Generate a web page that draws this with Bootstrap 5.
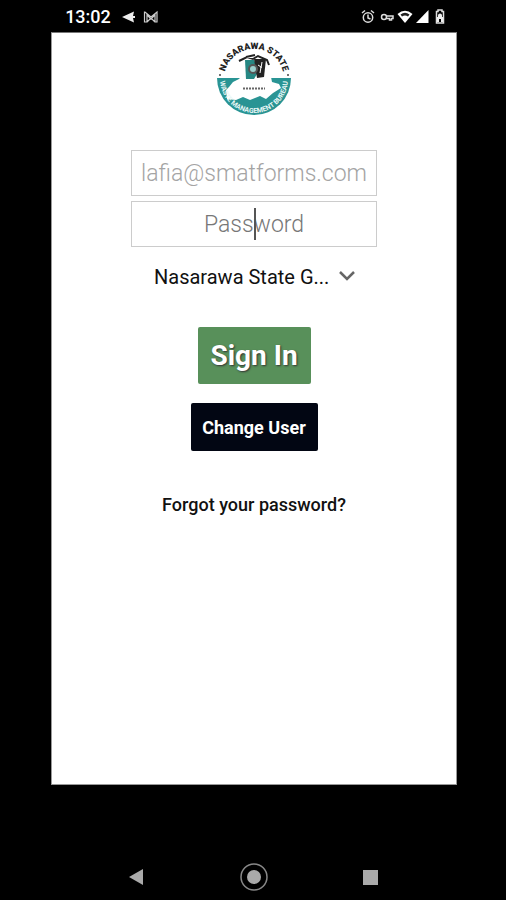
<!DOCTYPE html>
<html lang="en">
<head>
<meta charset="utf-8">
<meta name="viewport" content="width=device-width, initial-scale=1">
<title>Sign in</title>
<link href="https://cdn.jsdelivr.net/npm/bootstrap@5.3.0/dist/css/bootstrap.min.css" rel="stylesheet">
<style>
body { font-family: Roboto, "Liberation Sans", sans-serif; background: #000; color: #111; padding-left: 2px; }
.phone { width: 80.5%; }
.status-bar { height: 32px; padding: 2px 12px 0 14px; font-size: 18px; line-height: 30px; }
.screen { border: 1px solid #999; border-top-color: #777; padding-top: 8px; }
.form-column { width: 246px; padding-top: 7px; }
.text-field { height: 46px; padding: 0 4px; border: 1px solid #ccc; border-radius: 0; font-size: 23px; line-height: 32px; font-weight: 300; text-align: center; }
.text-field::placeholder { color: #777; opacity: 1; }
.text-field.email::placeholder { color: #a4a4a4; }
.password-row { margin-top: 5px; }
.caret-line { left: 50%; top: 7px; width: 2px; height: 32px; background: #555; }
.org-row { margin-top: 12px; }
.org-select { width: 200px; height: 36px; padding: 0 20px 0 0; border: 0; font-size: 20px; line-height: 28px; color: #111; background-image: none; }
.chevron { right: -2px; top: 11px; }
.sign-in { height: 57px; width: 113px; margin-top: 32px; padding: 0; border: 0; border-radius: 2px; background: #58905a; font-size: 28px; text-shadow: 1px 1px 2px #333; }
.change-user { height: 48px; width: 127px; margin-top: 19px; padding: 0; border: 0; border-radius: 2px; background: #020613; font-size: 18px; }
.forgot { margin-top: 42px; font-size: 18px; line-height: 24px; color: #111; }
.system-nav { height: 115px; padding: 0 72px 8px; }
</style>
</head>
<body>
<div class="phone d-flex flex-column min-vh-100 mx-auto">
  <header class="status-bar d-flex align-items-center text-white">
    <span class="fw-medium">13:02</span>
    <svg class="ms-2" width="40" height="16" viewBox="0 0 40 16" aria-hidden="true">
      <path d="M3 8 15 2.500 14 7h2v2h-2l1 4.500Z" fill="#eee"/>
      <path d="M25.500 3v10h2.500V6l4 4 4-4v7h2V3l-6 5-6-5Zm2.500 10 4-4 4 4" fill="none" stroke="#ccc" stroke-width="1.200"/>
    </svg>
    <svg class="ms-auto" width="84" height="18" viewBox="0 0 84 18" aria-hidden="true">
      <g fill="none" stroke="#ddd" stroke-width="1.500">
        <circle cx="7" cy="9.500" r="4.700"/><path d="m1 5 3-2.500M13 5l-3-2.500M7 6.500V10l2.500 1"/>
        <circle cx="23" cy="9" r="2.500"/><path d="M25.500 8H32v2.500h-1.500V12h-2v-1.500h-3"/>
      </g>
      <path d="M36.500 6q7.500-6.500 15 0L44 15Z" fill="#fff"/>
      <path d="M39.500 6.500q4.500-3.500 9 0l-1.500 2q-3-2-6 0Z" fill="#222"/>
      <path d="M67.500 2v13H55Z" fill="#fff"/>
      <path d="M75.500 3.500H77V2h4v1.500h1.500V15h-7Z" fill="none" stroke="#ddd" stroke-width="1.500"/>
      <path d="M77 9V7.500a2 2 0 0 1 4 0V9h1v5h-2v-3h-2v3h-2V9Z" fill="#eee"/>
    </svg>
  </header>

  <main class="screen bg-white flex-grow-1 d-flex flex-column align-items-center">
    <svg width="76" height="78" viewBox="0 0 76 78" role="img" aria-label="Nasarawa State Waste Management Bureau">
      <defs>
        <path id="arc-top" d="M8 38a30 30 0 0 1 60 0"/>
        <path id="arc-bottom" d="M4 38a34 34 0 0 0 68 0"/>
      </defs>
      <path d="M1 37h74a37 37 0 0 1-74 0Z" fill="#299494"/>
      <path d="m17 41 6-3 5-6 4 3h16l4-4 3 5 1 5 7 2 2 4-8 5-7 6-6-3-5 2-5 2-7-3-7 3-9-1-1-9 3-3Z" fill="#fff"/>
      <path d="M29 19h9l3 6v8l-3 5h-8Z" fill="#268783"/>
      <path d="M38 18h12l-2 18-7 1Z" fill="#222"/>
      <circle cx="37" cy="28" r="5" fill="#555"/><circle cx="37" cy="28" r="3" fill="#9ad1cf"/>
      <path d="m42 24 3 2-1 6M46 21l-1 6" stroke="#fff" stroke-width="1" fill="none"/>
      <path d="m23 20 8-4 6 2 5-3 9 4 2 5M30 16l9-2" fill="none" stroke="#222" stroke-width="2"/>
      <path d="M27 47.500h22" stroke="#666" stroke-width="2" stroke-dasharray="2 1"/>
      <text font-family="Roboto, sans-serif" font-size="9" font-weight="900" fill="#222" text-anchor="middle"><textPath href="#arc-top" startOffset="50%">NASARAWA STATE</textPath></text>
      <text font-family="Roboto, sans-serif" font-size="7" font-weight="700" fill="#e9f7f6" text-anchor="middle"><textPath href="#arc-bottom" startOffset="50%">WASTE MANAGEMENT BUREAU</textPath></text>
      <circle cx="4" cy="34" r="1" fill="#444"/><circle cx="72" cy="34" r="1" fill="#444"/>
    </svg>

    <form class="form-column d-flex flex-column align-items-center mt-4">
      <input class="form-control text-field email" id="email" type="email" aria-label="Email" placeholder="lafia@smatforms.com">
      <div class="password-row position-relative w-100">
        <input class="form-control text-field" id="password" type="password" aria-label="Password" placeholder="Password">
        <span class="caret-line position-absolute"></span>
      </div>
      <div class="org-row position-relative">
        <select class="form-select org-select bg-white" id="org" aria-label="Organisation"><option>Nasarawa State G...</option></select>
        <svg class="chevron position-absolute pe-none" width="18" height="12" viewBox="0 0 18 12" aria-hidden="true"><path d="m2 2 7 7 7-7" fill="none" stroke="#666" stroke-width="2.500"/></svg>
      </div>
      <button class="btn btn-success sign-in fw-bold" type="submit">Sign In</button>
      <button class="btn btn-dark change-user fw-bold" type="button">Change User</button>
      <a class="forgot text-decoration-none fw-medium" href="#">Forgot your password?</a>
    </form>
  </main>

  <nav class="system-nav d-flex align-items-end justify-content-between" aria-label="System">
    <button class="btn p-0 border-0 lh-1" type="button" aria-label="Back"><svg width="28" height="30" viewBox="0 0 28 30"><path d="M6 15 20 7v16Z" fill="#aaa"/></svg></button>
    <button class="btn p-0 border-0 lh-1" type="button" aria-label="Home"><svg width="30" height="30" viewBox="0 0 30 30"><circle cx="15" cy="15" r="13" fill="none" stroke="#888" stroke-width="1.500"/><circle cx="15" cy="15" r="7" fill="#aaa"/></svg></button>
    <button class="btn p-0 border-0 lh-1" type="button" aria-label="Recent apps"><svg width="28" height="30" viewBox="0 0 28 30"><path d="M6 8h15v15H6Z" fill="#aaa"/></svg></button>
  </nav>
</div>
<script src="https://cdn.jsdelivr.net/npm/bootstrap@5.3.0/dist/js/bootstrap.bundle.min.js"></script>
</body>
</html>
